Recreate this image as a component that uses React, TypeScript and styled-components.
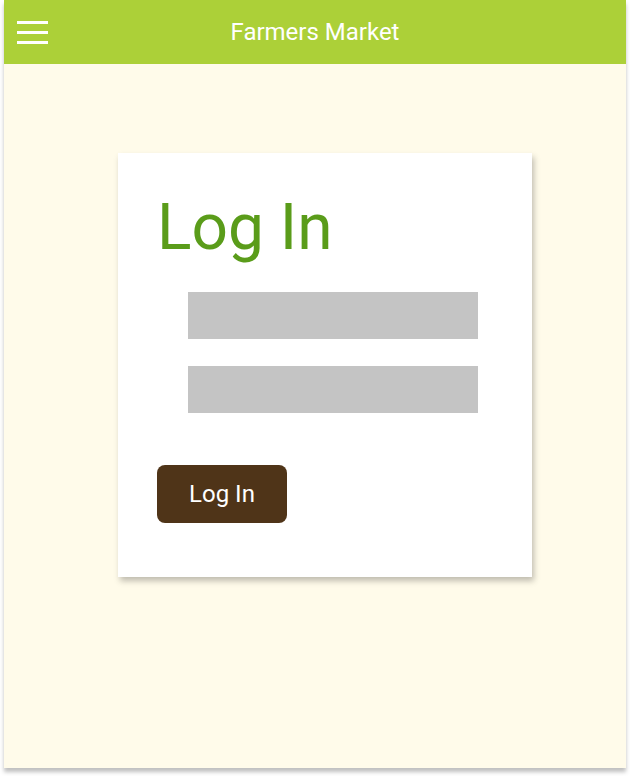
import styled, { createGlobalStyle } from "styled-components";

const GlobalStyle = createGlobalStyle`
  body {
    margin: 0;
    min-height: 776px;
    background: #ffffff;
    font-family: Roboto, "Liberation Sans", sans-serif;
  }
`;

const Frame = styled.div`
  margin: 0 0 8px 4px;
  width: 622px;
  height: 768px;
  background-color: #fffbea;
  box-shadow: 0 4px 4px rgba(0, 0, 0, 0.25);
  display: flex;
  flex-direction: column;
`;

const Header = styled.header`
  height: 64px;
  flex-shrink: 0;
  background-color: #acd038;
  display: grid;
  grid-template-columns: 1fr auto 1fr;
  align-items: center;
  padding-left: 13px;
`;

const Burger = styled.div`
  width: 31px;
  display: flex;
  flex-direction: column;
  gap: 7px;
  cursor: pointer;
`;

const BurgerLine = styled.span`
  display: block;
  height: 3px;
  background-color: #ffffff;
`;

const HeaderTitle = styled.h1`
  margin: 0;
  font-size: 24px;
  font-weight: 400;
  color: #ffffff;
  padding-right: 13px;
`;

const Main = styled.main`
  flex: 1;
  padding: 89px 0 0 114px;
`;

const Card = styled.div`
  width: 414px;
  height: 424px;
  box-sizing: border-box;
  background-color: #ffffff;
  box-shadow: 2px 4px 6px rgba(0, 0, 0, 0.25);
  padding: 37px 39px 0;
  display: flex;
  flex-direction: column;
  align-items: flex-start;
`;

const Title = styled.h2`
  margin: 0;
  font-size: 64px;
  font-weight: 400;
  color: #5a9c1a;
`;

const Fields = styled.div`
  margin: 27px 0 0 31px;
  display: flex;
  flex-direction: column;
  gap: 27px;
`;

const Field = styled.input`
  width: 290px;
  height: 47px;
  box-sizing: border-box;
  border: none;
  background-color: #c4c4c4;
  outline: none;
  padding: 0 12px;
  font: inherit;
`;

const Button = styled.button`
  margin-top: 52px;
  width: 130px;
  height: 58px;
  border: none;
  border-radius: 8px;
  background-color: #4f3418;
  color: #ffffff;
  font-family: Roboto, "Liberation Sans", sans-serif;
  font-size: 24px;
  cursor: pointer;
`;

const App = () => {
  return (
    <>
      <GlobalStyle />
      <Frame>
        <Header>
          <Burger>
            <BurgerLine />
            <BurgerLine />
            <BurgerLine />
          </Burger>
          <HeaderTitle>Farmers Market</HeaderTitle>
        </Header>
        <Main>
          <Card>
            <Title>Log In</Title>
            <Fields>
              <Field type="text" />
              <Field type="password" />
            </Fields>
            <Button>Log In</Button>
          </Card>
        </Main>
      </Frame>
    </>
  );
};

export default App;
